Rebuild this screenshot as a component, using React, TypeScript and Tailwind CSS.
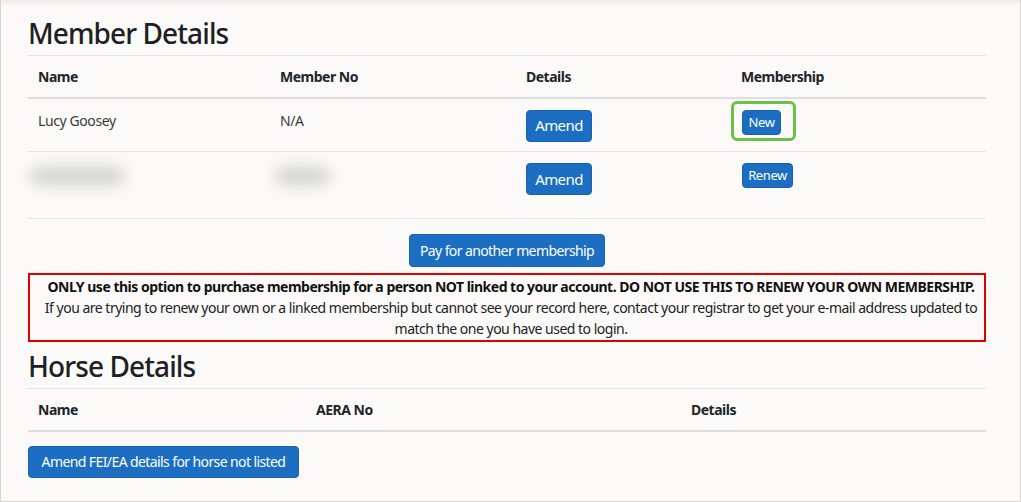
const font = { fontFamily: '"Noto Sans", "Open Sans", sans-serif' }

function Btn({ children, className = '' }: { children: React.ReactNode; className?: string }) {
  return (
    <button className={`rounded-[4px] border border-[#1861ac] bg-[#1b6ec2] whitespace-nowrap text-white ${className}`}>
      {children}
    </button>
  )
}

function Blur({ w }: { w: number }) {
  return (
    <div className="flex h-[27px] items-center">
      <div className="h-[20px] rounded-full bg-[#d6d6d6] blur-[7px]" style={{ width: w }} />
    </div>
  )
}

export default function App() {
  return (
    <div
      style={font}
      className="h-[502px] w-[1021px] overflow-hidden border border-t-0 border-[#d4d4d4] bg-[#fbfaf8] pl-[27px] pr-[34px] text-[#212529] shadow-[inset_0_8px_8px_-8px_rgba(0,0,0,0.12)]"
    >
      <h2 className="pt-[16px] text-[28px] leading-[34px] font-medium tracking-[-0.9px] text-[#1d2125]">Member Details</h2>

      <table className="mt-[5px] w-full border-collapse text-[14px]">
        <thead>
          <tr className="h-[42px] border-t border-b-2 border-t-[#e3e3e3] border-b-[#dedede] text-left tracking-[-0.5px]">
            <th className="w-[242px] pl-[10px] font-bold">Name</th>
            <th className="w-[246px] pl-[10px] font-bold">Member No</th>
            <th className="w-[215px] pl-[10px] font-bold">Details</th>
            <th className="pl-[10px] font-bold">Membership</th>
          </tr>
        </thead>
        <tbody>
          <tr className="h-[54px] border-b border-[#e6e6e6] align-top tracking-[-0.4px]">
            <td className="pt-[11px] pl-[10px] leading-[21px] text-[#3a3a3a]">Lucy Goosey</td>
            <td className="pt-[11px] pl-[10px] leading-[21px] text-[#3a3a3a]">N/A</td>
            <td className="pt-[11px] pl-[10px]">
              <Btn className="h-[32px] w-[66px] text-[15px] tracking-[-0.6px]">Amend</Btn>
            </td>
            <td className="pt-[2px] pl-0">
              <div className="inline-flex h-[40px] w-[65px] items-start rounded-[6px] border-[3px] border-[#6cc04a] pt-[6px] pl-[8px]">
                <Btn className="h-[25px] w-[39px] text-[13px] leading-none tracking-[-0.4px]">New</Btn>
              </div>
            </td>
          </tr>
          <tr className="h-[67px] border-b border-[#e6e6e6] align-top">
            <td className="pt-[10px] pl-[2px]">
              <Blur w={95} />
            </td>
            <td className="pt-[10px] pl-[5px]">
              <Blur w={55} />
            </td>
            <td className="pt-[11px] pl-[10px]">
              <Btn className="h-[32px] w-[66px] text-[15px] tracking-[-0.6px]">Amend</Btn>
            </td>
            <td className="pt-[11px] pl-[11px]">
              <Btn className="h-[25px] w-[51px] text-[13px] leading-none tracking-[-0.4px]">Renew</Btn>
            </td>
          </tr>
        </tbody>
      </table>

      <div className="mt-[15px] flex justify-center">
        <Btn className="h-[33px] w-[196px] text-[14px] tracking-[-0.6px]">Pay for another membership</Btn>
      </div>

      <div className="mt-[6px] border-2 border-[#e00000] px-[6px] py-[1px] pl-[14px] text-center text-[14px] leading-[21px] tracking-[-0.5px] text-[#222]">
        <p className="font-bold text-[#111]">
          ONLY use this option to purchase membership for a person NOT linked to your account. DO NOT USE THIS TO RENEW YOUR OWN MEMBERSHIP.
        </p>
        <p>
          If you are trying to renew your own or a linked membership but cannot see your record here, contact your registrar to get your e-mail address updated to match the one you have used to login.
        </p>
      </div>

      <h2 className="pt-[7px] text-[28px] leading-[34px] font-medium tracking-[-0.9px] text-[#1d2125]">Horse Details</h2>

      <table className="mt-[5px] w-full border-collapse text-[14px]">
        <thead>
          <tr className="h-[42px] border-t border-b-2 border-t-[#e3e3e3] border-b-[#dedede] text-left tracking-[-0.5px]">
            <th className="w-[278px] pl-[10px] font-bold">Name</th>
            <th className="w-[375px] pl-[10px] font-bold">AERA No</th>
            <th className="pl-[10px] font-bold">Details</th>
          </tr>
        </thead>
      </table>

      <div className="mt-[14px]">
        <Btn className="h-[32px] w-[271px] text-[14px] tracking-[-0.6px]">Amend FEI/EA details for horse not listed</Btn>
      </div>
    </div>
  )
}
